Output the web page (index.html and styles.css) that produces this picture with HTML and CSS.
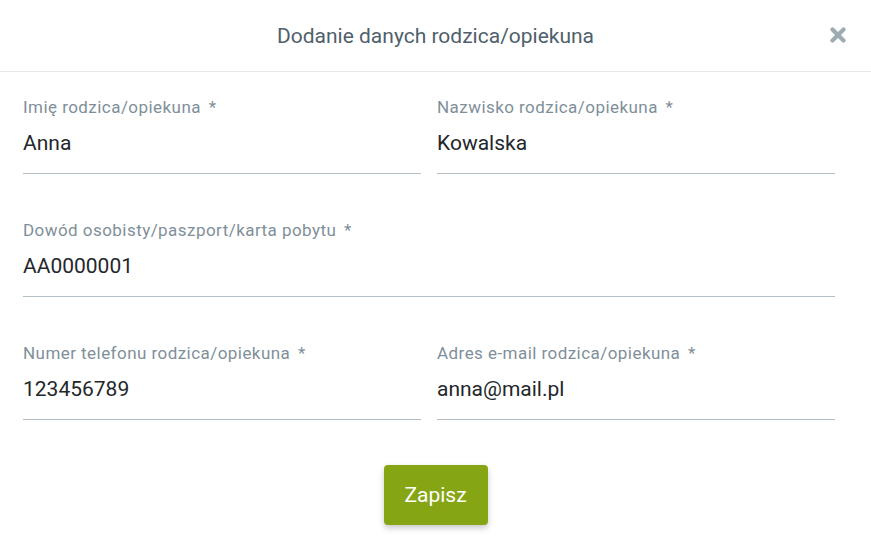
FILE: index.html
```html
<!DOCTYPE html>
<html lang="pl">
<head>
<meta charset="utf-8">
<title>Dodanie danych rodzica/opiekuna</title>
<link rel="stylesheet" href="styles.css">
</head>
<body>
<div class="modal">
  <header class="modal-header">
    <h1 class="modal-title">Dodanie danych rodzica/opiekuna</h1>
    <button class="close" aria-label="Zamknij">
      <svg width="16" height="16" viewBox="0 0 16 16"><path d="M2.5 2.5 L13.5 13.5 M13.5 2.5 L2.5 13.5" stroke="#9eabb3" stroke-width="4.2" stroke-linecap="round"/></svg>
    </button>
  </header>
  <form class="modal-body">
    <div class="fields">
      <div class="field">
        <div class="label">Imię rodzica/opiekuna <span class="req">*</span></div>
        <div class="value">Anna</div>
      </div>
      <div class="field">
        <div class="label">Nazwisko rodzica/opiekuna <span class="req">*</span></div>
        <div class="value">Kowalska</div>
      </div>
      <div class="field wide">
        <div class="label">Dowód osobisty/paszport/karta pobytu <span class="req">*</span></div>
        <div class="value">AA0000001</div>
      </div>
      <div class="field">
        <div class="label">Numer telefonu rodzica/opiekuna <span class="req">*</span></div>
        <div class="value">123456789</div>
      </div>
      <div class="field">
        <div class="label">Adres e-mail rodzica/opiekuna <span class="req">*</span></div>
        <div class="value">anna@mail.pl</div>
      </div>
    </div>
    <div class="actions">
      <button type="button" class="btn-save">Zapisz</button>
    </div>
  </form>
</div>
</body>
</html>
```

FILE: styles.css
```css
html, body {
  margin: 0;
  padding: 0;
  background: #ffffff;
}
body {
  font-family: Roboto, "Liberation Sans", Arial, sans-serif;
  width: 871px;
  height: 549px;
  overflow: hidden;
}
.modal {
  width: 871px;
}
.modal-header {
  height: 71px;
  border-bottom: 1px solid #e6e8ea;
  display: flex;
  align-items: center;
  justify-content: center;
  position: relative;
}
.modal-title {
  margin: 0;
  font-size: 21px;
  font-weight: 400;
  color: #4f5f6b;
  line-height: 24px;
  padding-top: 1px;
}
.close {
  position: absolute;
  right: 25px;
  top: 27px;
  width: 16px;
  height: 16px;
  padding: 0;
  border: 0;
  background: none;
  display: block;
}
.close svg { display: block; }
.modal-body {
  padding: 25px 36px 0 23px;
}
.fields {
  display: grid;
  grid-template-columns: 398px 398px;
  column-gap: 16px;
  row-gap: 46px;
}
.field {
  border-bottom: 1px solid #b4bfc5;
  padding-bottom: 18px;
}
.field.wide {
  grid-column: 1 / span 2;
}
.label {
  font-size: 17px;
  line-height: 20px;
  letter-spacing: 0.45px;
  color: #7f8f9a;
}
.req {
  margin-left: 3px;
}
.value {
  margin-top: 14px;
  font-size: 21px;
  line-height: 24px;
  color: #23272b;
}
.actions {
  display: flex;
  justify-content: center;
  margin-top: 45px;
  padding-left: 13px;
}
.btn-save {
  width: 104px;
  height: 60px;
  border: 0;
  border-radius: 4px;
  background: #86a514;
  color: #ffffff;
  font-family: Roboto, "Liberation Sans", Arial, sans-serif;
  font-size: 21px;
  box-shadow: 0 3px 6px rgba(0, 0, 0, 0.22);
  padding: 0;
}
```
